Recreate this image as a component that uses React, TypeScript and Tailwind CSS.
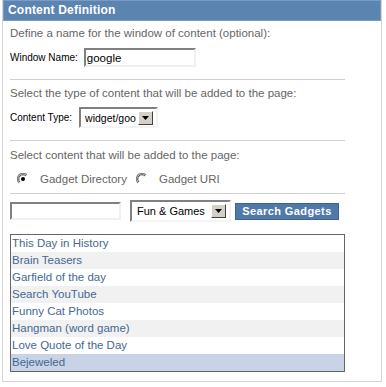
import { ReactNode } from "react"

const GADGETS = [
  "This Day in History",
  "Brain Teasers",
  "Garfield of the day",
  "Search YouTube",
  "Funny Cat Photos",
  "Hangman (word game)",
  "Love Quote of the Day",
  "Bejeweled",
]

const SELECTED = "Bejeweled"

function Divider({ className = "" }: { className?: string }) {
  return <div className={`h-px w-[335px] bg-[#d0d0d0] ${className}`} />
}

function Radio({ checked }: { checked?: boolean }) {
  return (
    <svg width="12" height="12" viewBox="0 0 12 12" aria-hidden="true">
      <path d="M2 10 A5 5 0 0 1 10 2" fill="none" stroke="#808080" strokeWidth="1.2" />
      <path d="M3 9 A3.8 3.8 0 0 1 9 3" fill="none" stroke="#404040" strokeWidth="1" />
      <path d="M10 2 A5 5 0 0 1 2 10" fill="none" stroke="#ffffff" strokeWidth="1.2" />
      {checked && <circle cx="6" cy="6" r="2" fill="#000" />}
    </svg>
  )
}

/** Old-style select box with a bevelled arrow button. */
function FakeSelect({ value, className }: { value: string; className: string }) {
  return (
    <div
      className={`flex items-center justify-between gap-[2px] border-2 border-t-[#808080] border-l-[#808080] border-r-[#f4f4f4] border-b-[#f4f4f4] bg-white pl-[4px] pr-[3px] text-black ${className}`}
    >
      <span className="overflow-hidden whitespace-nowrap">{value}</span>
      <span className="flex h-[14px] w-[15px] shrink-0 items-center justify-center border border-t-white border-l-white border-r-[#404040] border-b-[#404040] bg-[#d4d0c8]">
        <svg width="7" height="4" viewBox="0 0 7 4" aria-hidden="true">
          <path d="M0 0 H7 L3.5 4 Z" fill="#000" />
        </svg>
      </span>
    </div>
  )
}

function Field({ children }: { children: ReactNode }) {
  return <div className="flex items-center">{children}</div>
}

export default function App() {
  return (
    <div className="h-[387px] w-[386px] bg-white font-['Liberation_Sans',Arial,sans-serif] text-[11.5px] leading-[14px]">
      <div className="ml-[2px] h-[382px] w-[380px] border border-t-0 border-[#d4d4d4]">
        <div className="h-[21px] border border-[#7a9cc4] bg-[#5b84b1] pl-[4px] text-[12px] font-bold leading-[19px] tracking-[0.2px] text-white">
          Content Definition
        </div>

        <div className="pl-[7px]">
          <p className="mt-[5px] text-[#666]">Define a name for the window of content (optional):</p>
          <Field>
            <div className="mt-[8px] flex items-center gap-[6px]">
              <span className="text-[10px] text-black">Window Name:</span>
              <div className="flex h-[19px] w-[112px] items-center border-2 border-t-[#808080] border-l-[#808080] border-r-[#f0f0f0] border-b-[#f0f0f0] bg-white pl-px text-[11.5px] text-black">
                google
              </div>
            </div>
          </Field>

          <Divider className="mt-[12px]" />

          <p className="mt-[6px] text-[#666]">Select the type of content that will be added to the page:</p>
          <div className="mt-[7px] flex items-center gap-[7px]">
            <span className="text-[10px] text-black">Content Type:</span>
            <FakeSelect value="widget/goo" className="h-[21px] w-[79px] text-[10.5px]" />
          </div>

          <Divider className="mt-[12px]" />

          <p className="mt-[7px] text-[#666]">Select content that will be added to the page:</p>
          <div className="mt-[10px] flex items-center text-[#666]">
            <span className="ml-[7px]">
              <Radio checked />
            </span>
            <span className="ml-[11px]">Gadget Directory</span>
            <span className="ml-[9px]">
              <Radio />
            </span>
            <span className="ml-[11px]">Gadget URI</span>
          </div>

          <Divider className="mt-[7px]" />

          <div className="mt-[6px] flex h-[22px] items-center">
            <div className="h-[18px] w-[111px] border-2 border-t-[#808080] border-l-[#808080] border-r-[#f0f0f0] border-b-[#f0f0f0] bg-white" />
            <FakeSelect value="Fun & Games" className="ml-[9px] h-[22px] w-[101px] pl-[5px] text-[11px]" />
            <button className="ml-[4px] h-[17px] w-[104px] border border-[#3d628f] bg-[#5079ab] text-[11px] font-bold leading-[15px] tracking-[0.4px] text-white">
              Search Gadgets
            </button>
          </div>

          <ul className="mt-[12px] w-[335px] border border-[#666]">
            {GADGETS.map((g, i) => (
              <li
                key={g}
                className={`h-[17px] pl-[1px] leading-[17px] text-[#456893] ${
                  g === SELECTED ? "bg-[#c8d3e5]" : i % 2 === 1 ? "bg-[#f1f1f1]" : "bg-white"
                }`}
              >
                {g}
              </li>
            ))}
          </ul>
        </div>
      </div>
    </div>
  )
}
